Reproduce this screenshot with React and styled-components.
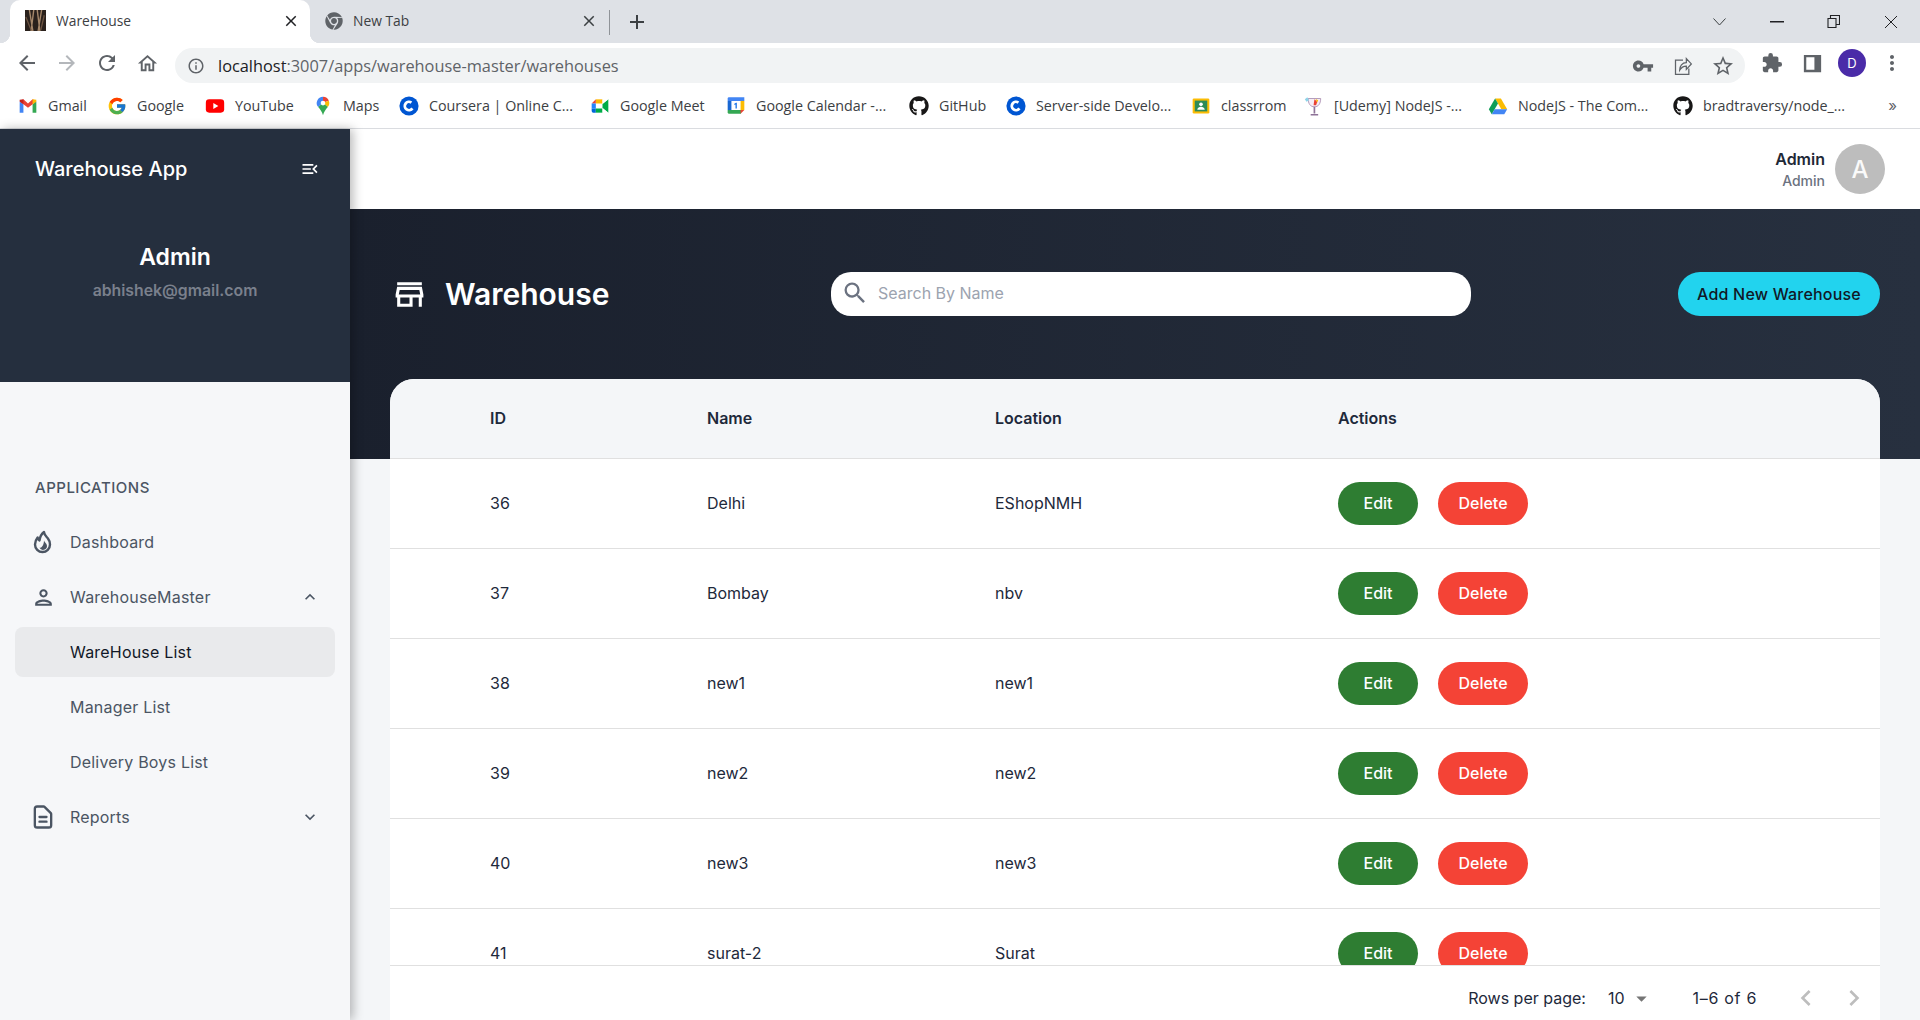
import React from "react";
import styled, { createGlobalStyle } from "styled-components";
import { FcGoogle } from "react-icons/fc";
import { FaGithub, FaChrome } from "react-icons/fa";
import { HiOutlineDocumentText } from "react-icons/hi";
import {
  MdOutlineMenuOpen,
  MdOutlinePerson,
  MdOutlineStore,
  MdSearch,
  MdVpnKey,
  MdStarBorder,
  MdExtension,
  MdKeyboardArrowUp,
  MdKeyboardArrowDown,
  MdChevronLeft,
  MdChevronRight,
  MdArrowDropDown,
  MdInfoOutline,
  MdArrowBack,
  MdArrowForward,
  MdRefresh,
  MdOutlineHome,
  MdClose,
  MdAdd,
  MdMoreVert,
} from "react-icons/md";

const GlobalStyle = createGlobalStyle`
  html, body {
    margin: 0;
    padding: 0;
    height: 100%;
    overflow: hidden;
    font-family: "Inter", "Liberation Sans", sans-serif;
    background: #f4f6f8;
  }
  * { box-sizing: border-box; }
`;

const Page = styled.div`
  width: 1920px;
  height: 1020px;
  display: flex;
  flex-direction: column;
  overflow: hidden;
`;

/* browser chrome */
const TabStrip = styled.div`
  height: 43px;
  background: #dee1e6;
  display: flex;
  align-items: stretch;
  padding-left: 10px;
  color: #3c4043;
  font-family: "Open Sans", "Liberation Sans", sans-serif;
`;

const Tab = styled.div`
  position: relative;
  width: ${(p) => p.$w}px;
  display: flex;
  align-items: center;
  padding: 0 10px 2px 15px;
  background: ${(p) => (p.$active ? "#fff" : "transparent")};
  border-radius: 10px 10px 0 0;
  font-size: 13.8px;
  gap: 10px;
  ${(p) =>
    p.$active &&
    `
    &::before, &::after {
      content: "";
      position: absolute;
      bottom: 0;
      width: 10px;
      height: 10px;
    }
    &::before { left: -10px; background: radial-gradient(circle at 0 0, transparent 10px, #fff 10.5px); }
    &::after { right: -10px; background: radial-gradient(circle at 100% 0, transparent 10px, #fff 10.5px); }
  `}
`;

const TabTitle = styled.span`
  flex: 1;
`;

const TabDivider = styled.div`
  width: 1px;
  height: 25px;
  margin: 10px 0 0 1px;
  background: #8f9398;
`;

const NewTab = styled.div`
  width: 54px;
  display: flex;
  align-items: center;
  justify-content: center;
  padding-top: 1px;
  font-size: 24px;
  color: #3c4043;
`;

const WindowButtons = styled.div`
  margin-left: auto;
  display: flex;
  align-items: center;
  padding-right: 1px;
`;

const WindowButton = styled.div`
  width: 57px;
  height: 38px;
  display: flex;
  align-items: center;
  justify-content: center;
`;

const Toolbar = styled.div`
  height: 40px;
  background: #fff;
  display: flex;
  align-items: center;
  padding: 0 8px 0 7px;
  flex: none;
`;

const ToolButton = styled.div`
  width: 40px;
  height: 40px;
  display: flex;
  align-items: center;
  justify-content: center;
  font-size: ${(p) => p.$size || 24}px;
  color: ${(p) => p.$color || "#5f6368"};
  flex: none;
`;

const Omnibox = styled.div`
  width: 1570px;
  height: 35px;
  margin: 5px 7px 0 8px;
  border-radius: 18px;
  background: #f1f3f4;
  display: flex;
  align-items: center;
  padding: 0 2px 0 12px;
`;

const InfoIcon = styled.div`
  display: flex;
  font-size: 18px;
  color: #5f6368;
  margin-right: 13px;
`;

const Url = styled.div`
  flex: 1;
  font-family: "Open Sans", "Liberation Sans", sans-serif;
  font-size: 16.35px;
  color: #5f6368;
  b {
    font-weight: 400;
    color: #202124;
  }
`;

const Avatar = styled.div`
  width: 28px;
  height: 28px;
  border-radius: 50%;
  background: #4a2ba8;
  color: #fff;
  font-size: 13px;
  display: flex;
  align-items: center;
  justify-content: center;
`;

const BookmarksBar = styled.div`
  height: 46px;
  background: #fff;
  border-bottom: 1px solid #dadce0;
  display: flex;
  align-items: center;
  padding: 0 0 0 18px;
  flex: none;
`;

const Bookmark = styled.div`
  width: ${(p) => p.$w}px;
  display: flex;
  align-items: center;
  gap: 10px;
  font-family: "Open Sans", "Liberation Sans", sans-serif;
  font-size: 14.3px;
  color: #3c4043;
  white-space: nowrap;
  flex: none;
`;

const BookmarkIcon = styled.span`
  display: flex;
  width: 20px;
  justify-content: center;
  font-size: 20px;
  flex: none;
`;

const More = styled.div`
  margin-left: auto;
  padding-right: 23px;
  font-size: 15px;
  color: #5f6368;
`;

/* app */
const Body = styled.div`
  flex: 1;
  min-height: 0;
  display: flex;
`;

const Sidebar = styled.aside`
  width: 350px;
  flex: none;
  background: #f6f7f9;
  box-shadow: 3px 0 10px rgba(0, 0, 0, 0.28);
  z-index: 2;
`;

const SidebarHead = styled.div`
  height: 253px;
  background: #252f3e;
  color: #fff;
  display: flex;
  flex-direction: column;
`;

const BrandRow = styled.div`
  display: flex;
  align-items: center;
  justify-content: space-between;
  padding: 14px 30px 0 35px;
  height: 66px;
`;

const Brand = styled.div`
  font-size: 20px;
  font-weight: 500;
`;

const Toggle = styled.div`
  display: flex;
  font-size: 20px;
`;

const Profile = styled.div`
  margin-top: 47px;
  text-align: center;
`;

const ProfileName = styled.div`
  font-size: 23px;
  font-weight: 600;
  line-height: 30px;
`;

const ProfileMail = styled.div`
  margin-top: 9px;
  font-size: 15.8px;
  font-weight: 600;
  line-height: 20px;
  color: #7a808c;
`;

const Nav = styled.nav`
  padding: 95px 15px 0;
`;

const NavLabel = styled.div`
  padding-left: 20px;
  height: 22px;
  line-height: 22px;
  font-size: 15px;
  font-weight: 500;
  letter-spacing: 0.5px;
  color: #4b5563;
  margin-bottom: 18px;
`;

const NavItem = styled.div`
  height: 50px;
  margin-bottom: 5px;
  border-radius: 8px;
  display: flex;
  align-items: center;
  padding-left: 14px;
  padding-right: 15px;
  font-size: 16px;
  letter-spacing: 0.2px;
  color: ${(p) => (p.$active ? "#111827" : "#4b5563")};
  background: ${(p) => (p.$active ? "#e9eaec" : "transparent")};
`;

const NavIcon = styled.span`
  width: 28px;
  margin-right: 13px;
  display: flex;
  justify-content: center;
  font-size: ${(p) => p.$size || 25}px;
  flex: none;
`;

const NavChevron = styled.span`
  margin-left: auto;
  display: flex;
  font-size: 20px;
  color: #4b5563;
`;

const Main = styled.main`
  flex: 1;
  min-width: 0;
  display: flex;
  flex-direction: column;
  background: #f4f6f8;
`;

const TopBar = styled.header`
  height: 80px;
  background: #fff;
  display: flex;
  align-items: center;
  justify-content: flex-end;
  padding: 0 35px 0 0;
  gap: 10px;
  flex: none;
`;

const UserBlock = styled.div`
  text-align: right;
`;

const UserName = styled.div`
  font-size: 16px;
  font-weight: 600;
  line-height: 22px;
  color: #1f2937;
`;

const UserRole = styled.div`
  margin-top: 1px;
  font-size: 14px;
  font-weight: 500;
  line-height: 20px;
  color: #6b7280;
`;

const UserAvatar = styled.div`
  width: 50px;
  height: 50px;
  border-radius: 50%;
  background: #bdbdbd;
  color: #fafafa;
  font-size: 24px;
  font-weight: 500;
  display: flex;
  align-items: center;
  justify-content: center;
`;

const Hero = styled.section`
  height: 250px;
  flex: none;
  background: linear-gradient(to right, #1a202d, #27303f);
  display: flex;
  align-items: flex-start;
  padding: 63px 40px 0;
`;

const HeroTitle = styled.div`
  width: 441px;
  height: 44px;
  display: flex;
  align-items: center;
  gap: 17px;
  color: #fff;
  font-size: 30px;
  font-weight: 600;
  flex: none;
`;

const HeroIcon = styled.span`
  display: flex;
  margin-left: 1px;
  font-size: 37px;
`;

const SearchBox = styled.div`
  width: 640px;
  height: 44px;
  border-radius: 20px;
  background: #fff;
  display: flex;
  align-items: center;
  padding: 0 10px 2px;
  gap: 9px;
  font-size: 16px;
  color: #9ca3af;
`;

const SearchIcon = styled.span`
  display: flex;
  font-size: 28px;
  color: #6b7280;
`;

const AddButton = styled.button`
  margin-left: auto;
  width: 202px;
  height: 44px;
  border: none;
  border-radius: 22px;
  background: #22d3ee;
  color: #111827;
  font-family: inherit;
  font-size: 16px;
  font-weight: 500;
  letter-spacing: 0.2px;
`;

const Card = styled.section`
  margin: -80px 40px 0;
  flex: 1;
  min-height: 0;
  display: flex;
  flex-direction: column;
  background: #fff;
  border-radius: 24px 24px 0 0;
  overflow: hidden;
`;

const Row = styled.div`
  display: grid;
  grid-template-columns: 217px 288px 343px 1fr;
  align-items: center;
  padding-left: 100px;
  flex: none;
  height: ${(p) => (p.$head ? 80 : 90)}px;
  border-bottom: 1px solid #e0e0e0;
  background: ${(p) => (p.$head ? "#f4f6f8" : "#fff")};
  font-size: 16px;
  font-weight: ${(p) => (p.$head ? 600 : 400)};
  color: #1e293b;
`;

const Cell = styled.div`
  padding-bottom: 2px;
`;

const Rows = styled.div`
  flex: 1;
  min-height: 0;
  overflow: hidden;
`;

const Actions = styled.div`
  display: flex;
  gap: 20px;
`;

const PillButton = styled.button`
  width: ${(p) => (p.$danger ? 90 : 80)}px;
  height: 43px;
  padding: 0 0 2px;
  border: none;
  border-radius: 22px;
  background: ${(p) => (p.$danger ? "#f44336" : "#2e7d32")};
  color: #fff;
  font-family: inherit;
  font-size: 16px;
  font-weight: 500;
`;

const Pager = styled.footer`
  height: 55px;
  flex: none;
  border-top: 1px solid #e0e0e0;
  background: #fff;
  display: flex;
  align-items: center;
  justify-content: flex-end;
  padding: 10px 10px 0 0;
  font-size: 16px;
  color: #1e293b;
`;

const PageSize = styled.div`
  display: flex;
  align-items: center;
  margin: 0 39px 0 22px;
  gap: 4px;
`;

const Caret = styled.span`
  display: flex;
  font-size: 25px;
  color: #757575;
`;

const PageRange = styled.span`
  letter-spacing: 0.7px;
`;

const PageNav = styled.div`
  display: flex;
  margin-left: 33px;
  gap: 16px;
  font-size: 32px;
  color: #bdbdbd;
`;

/* drawn icons */
const Svg = ({ children, size = 20 }) => (
  <svg width={size} height={size} viewBox="0 0 24 24">
    {children}
  </svg>
);

const Favicon = () => (
  <Svg size={21}>
    <rect width="24" height="24" fill="#2a211c" />
    <path d="M5 0l4 24M10 0 7 24M14 0l3 24M19 0l-4 24" stroke="#a5876a" strokeWidth="1.600" />
    <path d="M1 8l6 15M22 6l-4 17" stroke="#6d5442" strokeWidth="1.500" />
  </Svg>
);

const GmailIcon = () => (
  <Svg>
    <path d="M2 6.500V20h4.500V10z" fill="#4285f4" />
    <path d="M22 6.500V20h-4.500V10z" fill="#34a853" />
    <path d="M2 6.500 6.500 4 12 9l5.500-5L22 6.500 17.500 10 12 14 6.500 10z" fill="#ea4335" />
    <path d="M17.500 4 22 4.500v2L17.500 10z" fill="#fbbc04" />
    <path d="M2 4.500 6.500 4v6L2 6.500z" fill="#c5221f" />
  </Svg>
);

const YoutubeIcon = () => (
  <Svg>
    <rect x="1" y="4" width="22" height="16" rx="4" fill="#f00" />
    <path d="M10 8.500v7l6-3.500z" fill="#fff" />
  </Svg>
);

const MapsIcon = () => (
  <Svg>
    <path d="M12 1a7.500 7.500 0 0 0-5.800 12.300L12 8z" fill="#4285f4" />
    <path d="M12 1a7.500 7.500 0 0 1 7 4.800L12 8z" fill="#ea4335" />
    <path d="M19 5.800a7.500 7.500 0 0 1-1.200 7.500L12 8z" fill="#fbbc04" />
    <path d="M6.200 13.300 12 8l5.800 5.300c-2.500 3-4.600 5.500-5.800 9.700-1.200-4.200-3.300-6.700-5.800-9.700z" fill="#34a853" />
    <circle cx="12" cy="8.500" r="2.800" fill="#fff" />
  </Svg>
);

const CourseraIcon = () => (
  <Svg>
    <circle cx="12" cy="12" r="11.500" fill="#0056d2" />
    <circle cx="12" cy="12" r="5" fill="none" stroke="#fff" strokeWidth="3.400" strokeDasharray="23 9" transform="rotate(35 12 12)" />
  </Svg>
);

const MeetIcon = () => (
  <Svg>
    <path d="M7 4h8v5H7z" fill="#ffba00" />
    <path d="M2 9 7 4v5z" fill="#ea4335" />
    <path d="M2 9h5v6H2z" fill="#2684fc" />
    <path d="M2 15h5v5H4a2 2 0 0 1-2-2z" fill="#0066da" />
    <path d="M7 15h8v5H7z" fill="#00ac47" />
    <path d="M15 9.500 22 4v16l-7-5.500z" fill="#00ac47" />
    <path d="M15 4v5.500L22 4zM15 20v-5.500L22 20z" fill="#fff" />
  </Svg>
);

const CalendarIcon = () => (
  <Svg size={21}>
    <rect x="2" y="2" width="20" height="20" rx="2" fill="#fff" />
    <path d="M2 3.500A1.500 1.500 0 0 1 3.500 2H22v4.500H2z" fill="#4285f4" />
    <path d="M2 17.500h16V22H4a2 2 0 0 1-2-2z" fill="#34a853" />
    <path d="M17.500 6.500H22v11h-4.500z" fill="#fbbc04" />
    <path d="M2 6.500h4.500v11H2z" fill="#1967d2" />
    <path d="M17.500 17.500H22L17.500 22z" fill="#ea4335" />
    <path d="M10 10l2-1.300h1v7h-1.600v-5l-1.400.8z" fill="#1a73e8" />
  </Svg>
);

const ClassroomIcon = () => (
  <Svg>
    <rect x="2" y="3" width="20" height="18" rx="1.500" fill="#fbbc04" />
    <rect x="4.500" y="5.500" width="15" height="13" fill="#2e8b57" />
    <circle cx="12" cy="10" r="2.200" fill="#fff" />
    <path d="M7.500 16.500c.5-2.500 2.500-3.500 4.500-3.500s4 1 4.500 3.500z" fill="#fff" />
  </Svg>
);

const UdemyIcon = () => (
  <Svg size={22}>
    <path d="M5 3h15c0 6-2.500 10-7.500 10S5 9 5 3z" fill="#f5eef6" stroke="#a78bb0" strokeWidth="1" />
    <path d="M12.500 4l3.500 3-1.500 4h-3z" fill="#e94235" />
    <path d="M14 3.500l3 1.500-1.500 3z" fill="#fbbc04" />
    <path d="M12.500 13v8M8 22.500h9" stroke="#8e7398" strokeWidth="2" fill="none" />
    <path d="M1 4l3-2.500L6 5 3 7z" fill="#8ed3e8" />
  </Svg>
);

const DriveIcon = () => (
  <Svg>
    <path d="M8.500 3h7L23 16h-7z" fill="#fbbc04" />
    <path d="M8.500 3 1 16l3.500 6L12 9z" fill="#0f9d58" />
    <path d="M8 16h15l-3.500 6h-15z" fill="#4285f4" />
  </Svg>
);

const ShareIcon = () => (
  <svg width="20" height="20" viewBox="0 0 24 24" fill="none" stroke="#5f6368" strokeWidth="1.500">
    <path d="M12 5H3v17h16v-7" />
    <path d="M8 17c0-5 3-9 8-9V3l6 6.500-6 6.500v-4c-3 0-6 1.500-8 5z" />
  </svg>
);

const PanelIcon = () => (
  <svg width="23" height="23" viewBox="0 0 24 24">
    <path fillRule="evenodd" d="M3 3h18v18H3zM5.500 5.500v13H14v-13z" fill="#5f6368" />
  </svg>
);

const RestoreIcon = () => (
  <svg width="13" height="13" viewBox="0 0 13 13" fill="none" stroke="#202124" strokeWidth="1.100">
    <path d="M1 3.500h8v9H1zM3.500 3.500v-3h9v9H9" />
  </svg>
);

const FireIcon = () => (
  <svg width="1em" height="1em" viewBox="0 0 28 28" fill="none">
    <path
      d="M15 4c.3 3 2.300 4.500 3.800 6.300C20.100 12 21 14 21 16.500a7.500 7.500 0 0 1-15 0c0-2.700 1-5 2.600-7 .2 1.200.8 2.200 1.900 2.900C10.900 9 12.500 6 15 4z"
      stroke="#4b5563"
      strokeWidth="2.400"
      strokeLinejoin="round"
    />
    <path d="M15 12.500c.4 1.700 3 3 3 5.500a4 4 0 0 1-7.500 1.800c2 .2 4.300-2 4.500-7.300z" fill="#4b5563" />
  </svg>
);

const ThinChevron = () => (
  <svg width="13" height="8" viewBox="0 0 13 8" fill="none" stroke="#3c4043" strokeWidth="1">
    <path d="M.5.500l6 6.500 6-6.500" />
  </svg>
);

const bookmarks = [
  { name: "Gmail", w: 89, icon: <GmailIcon /> },
  { name: "Google", w: 98, icon: <FcGoogle /> },
  { name: "YouTube", w: 108, icon: <YoutubeIcon /> },
  { name: "Maps", w: 86, icon: <MapsIcon /> },
  { name: "Coursera | Online C...", w: 191, icon: <CourseraIcon /> },
  { name: "Google Meet", w: 136, icon: <MeetIcon /> },
  { name: "Google Calendar -...", w: 183, icon: <CalendarIcon /> },
  { name: "GitHub", w: 97, icon: <FaGithub color="#181717" /> },
  { name: "Server-side Develo...", w: 185, icon: <CourseraIcon /> },
  { name: "classrrom", w: 113, icon: <ClassroomIcon /> },
  { name: "[Udemy] NodeJS -...", w: 184, icon: <UdemyIcon /> },
  { name: "NodeJS - The Com...", w: 185, icon: <DriveIcon /> },
  { name: "bradtraversy/node_...", w: 200, icon: <FaGithub color="#181717" /> },
];

const warehouses = [
  { id: 36, name: "Delhi", location: "EShopNMH" },
  { id: 37, name: "Bombay", location: "nbv" },
  { id: 38, name: "new1", location: "new1" },
  { id: 39, name: "new2", location: "new2" },
  { id: 40, name: "new3", location: "new3" },
  { id: 41, name: "surat-2", location: "Surat" },
];

const App = () => {
  return (
    <Page>
      <GlobalStyle />
      <TabStrip>
        <Tab $active $w={300}>
          <Favicon />
          <TabTitle>WareHouse</TabTitle>
          <MdClose size={18} color="#202124" />
        </Tab>
        <Tab $w={298}>
          <FaChrome size={18} color="#5f6368" />
          <TabTitle>New Tab</TabTitle>
          <MdClose size={18} color="#3c4043" />
        </Tab>
        <TabDivider />
        <NewTab>
          <MdAdd />
        </NewTab>
        <WindowButtons>
          <WindowButton>
            <ThinChevron />
          </WindowButton>
          <WindowButton>
            <svg width="14" height="2"><rect width="14" height="1.500" fill="#202124" /></svg>
          </WindowButton>
          <WindowButton>
            <RestoreIcon />
          </WindowButton>
          <WindowButton>
            <svg width="14" height="14" stroke="#202124" strokeWidth="1"><path d="M1 1l12 12M13 1 1 13" /></svg>
          </WindowButton>
        </WindowButtons>
      </TabStrip>

      <Toolbar>
        <ToolButton><MdArrowBack /></ToolButton>
        <ToolButton $color="#b4b7bb"><MdArrowForward /></ToolButton>
        <ToolButton><MdRefresh /></ToolButton>
        <ToolButton $size={23}><MdOutlineHome /></ToolButton>
        <Omnibox>
          <InfoIcon><MdInfoOutline /></InfoIcon>
          <Url><b>localhost</b>:3007/apps/warehouse-master/warehouses</Url>
          <ToolButton $size={22}><MdVpnKey /></ToolButton>
          <ToolButton><ShareIcon /></ToolButton>
          <ToolButton><MdStarBorder /></ToolButton>
        </Omnibox>
        <ToolButton $size={22}><MdExtension /></ToolButton>
        <ToolButton><PanelIcon /></ToolButton>
        <ToolButton><Avatar>D</Avatar></ToolButton>
        <ToolButton><MdMoreVert /></ToolButton>
      </Toolbar>

      <BookmarksBar>
        {bookmarks.map((b) => (
          <Bookmark key={b.name} $w={b.w}>
            <BookmarkIcon>{b.icon}</BookmarkIcon>
            {b.name}
          </Bookmark>
        ))}
        <More>»</More>
      </BookmarksBar>

      <Body>
        <Sidebar>
          <SidebarHead>
            <BrandRow>
              <Brand>Warehouse App</Brand>
              <Toggle><MdOutlineMenuOpen /></Toggle>
            </BrandRow>
            <Profile>
              <ProfileName>Admin</ProfileName>
              <ProfileMail>abhishek@gmail.com</ProfileMail>
            </Profile>
          </SidebarHead>
          <Nav>
            <NavLabel>APPLICATIONS</NavLabel>
            <NavItem>
              <NavIcon $size={28}><FireIcon /></NavIcon>
              Dashboard
            </NavItem>
            <NavItem>
              <NavIcon><MdOutlinePerson /></NavIcon>
              WarehouseMaster
              <NavChevron><MdKeyboardArrowUp /></NavChevron>
            </NavItem>
            <NavItem $active>
              <NavIcon />
              WareHouse List
            </NavItem>
            <NavItem>
              <NavIcon />
              Manager List
            </NavItem>
            <NavItem>
              <NavIcon />
              Delivery Boys List
            </NavItem>
            <NavItem>
              <NavIcon $size={28}><HiOutlineDocumentText /></NavIcon>
              Reports
              <NavChevron><MdKeyboardArrowDown /></NavChevron>
            </NavItem>
          </Nav>
        </Sidebar>

        <Main>
          <TopBar>
            <UserBlock>
              <UserName>Admin</UserName>
              <UserRole>Admin</UserRole>
            </UserBlock>
            <UserAvatar>A</UserAvatar>
          </TopBar>
          <Hero>
            <HeroTitle>
              <HeroIcon><MdOutlineStore /></HeroIcon>
              Warehouse
            </HeroTitle>
            <SearchBox>
              <SearchIcon><MdSearch /></SearchIcon>
              Search By Name
            </SearchBox>
            <AddButton>Add New Warehouse</AddButton>
          </Hero>
          <Card>
            <Row $head>
              <Cell>ID</Cell>
              <Cell>Name</Cell>
              <Cell>Location</Cell>
              <Cell>Actions</Cell>
            </Row>
            <Rows>
              {warehouses.map((w) => (
                <Row key={w.id}>
                  <Cell>{w.id}</Cell>
                  <Cell>{w.name}</Cell>
                  <Cell>{w.location}</Cell>
                  <Actions>
                    <PillButton>Edit</PillButton>
                    <PillButton $danger>Delete</PillButton>
                  </Actions>
                </Row>
              ))}
            </Rows>
            <Pager>
              <span>Rows per page:</span>
              <PageSize>
                10
                <Caret><MdArrowDropDown /></Caret>
              </PageSize>
              <PageRange>1–6 of 6</PageRange>
              <PageNav>
                <MdChevronLeft />
                <MdChevronRight />
              </PageNav>
            </Pager>
          </Card>
        </Main>
      </Body>
    </Page>
  );
};

export default App;
